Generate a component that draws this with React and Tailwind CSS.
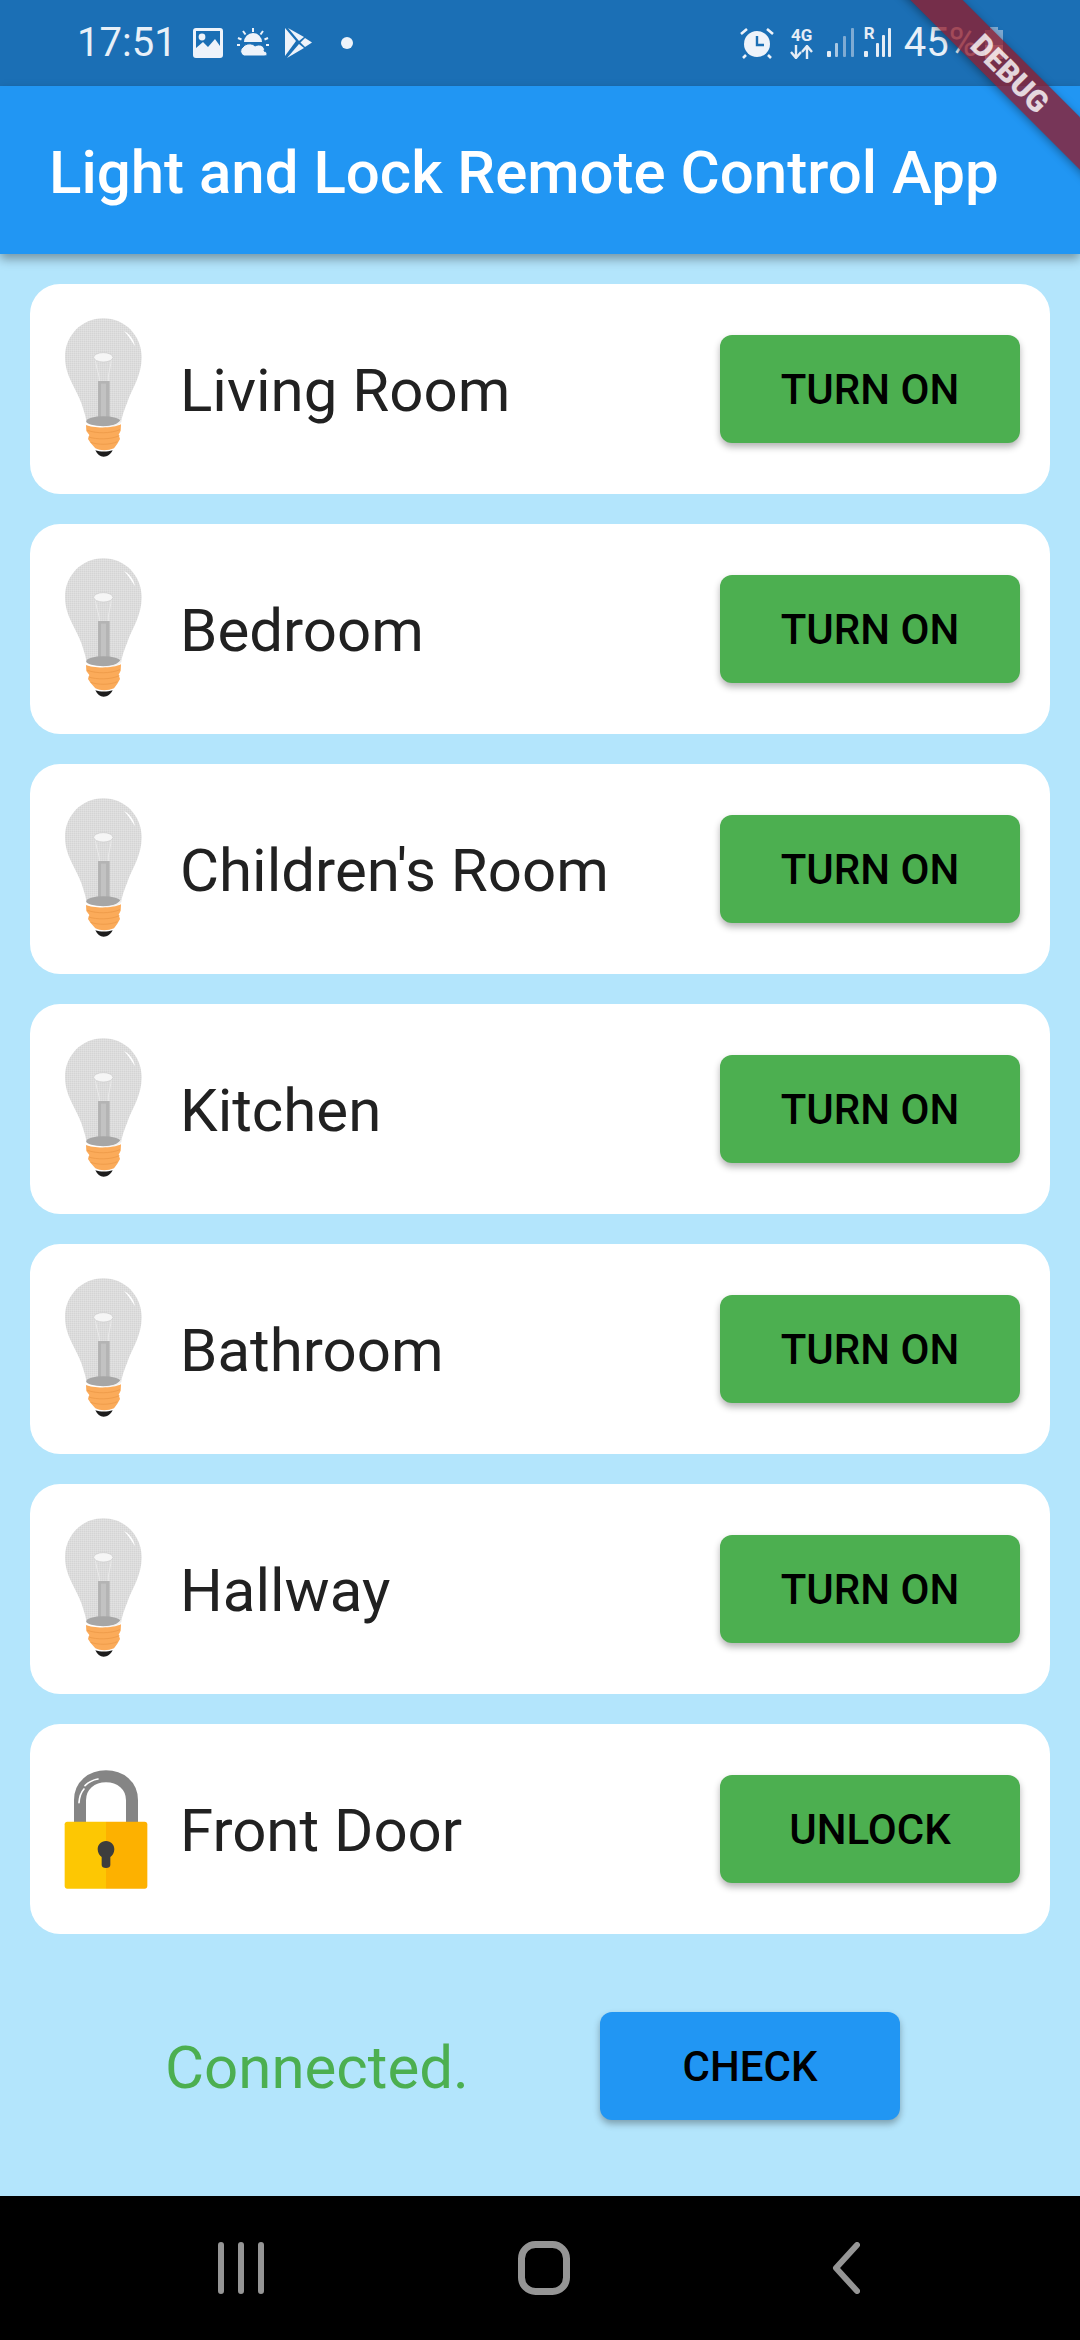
import React from 'react';

const rooms = ['Living Room', 'Bedroom', "Children's Room", 'Kitchen', 'Bathroom', 'Hallway'];

function Bulb({ id }) {
  return (
    <svg width="90" height="150" viewBox="120 75 270 450" className="shrink-0">
      <defs>
        <pattern id={id} width="6" height="6" patternUnits="userSpaceOnUse">
          <rect width="6" height="6" fill="#dcdcdc" />
          <rect width="3" height="3" fill="#d4d4d4" />
          <rect x="3" y="3" width="3" height="3" fill="#e2e2e2" />
        </pattern>
      </defs>
      <path d="M250 88C185 88 135 140 135 205C135 262 170 300 185 345C193 370 198 385 200 402L303 402C305 385 312 365 322 340C335 300 365 262 365 205C365 140 315 88 250 88Z" fill={`url(#${id})`} />
      <path d="M226 212C230 245 240 260 238 280M274 212C270 245 262 260 266 280" fill="none" stroke="#eaeaea" strokeWidth="3" />
      <ellipse cx="250" cy="205" rx="29" ry="14" fill="#f6f6f6" stroke="#c8c8c8" strokeWidth="2" />
      <rect x="234" y="276" width="35" height="112" fill="#b4b4b4" />
      <rect x="243" y="284" width="15" height="100" fill="#c2c2c2" />
      <ellipse cx="250" cy="397" rx="51" ry="15" fill="#a6a6a6" />
      <path d="M312 126C330 136 342 152 345 172C335 155 325 140 312 126Z" fill="#ffffff" />
      <path d="M250 412C275 412 292 406 302 392L303 402C290 412 270 416 250 412Z" fill="#f2f2f2" />
      <path d="M198 408C220 418 280 418 303 406L302 425L296 437L300 450L292 464L282 478C265 486 240 486 226 478L212 462L204 450L208 438L199 426Z" fill="#fbab5a" />
      <path d="M202 424C230 434 270 434 300 422M206 444C230 452 272 452 298 440M212 460C235 468 270 468 292 458" fill="none" stroke="#f09d4b" strokeWidth="3" />
      <path d="M226 484C240 489 262 489 278 484C272 496 262 503 251 503C240 503 232 496 226 484Z" fill="#1d1d1d" />
    </svg>
  );
}

function Lock() {
  return (
    <svg width="90" height="150" viewBox="120 99 270 450" className="shrink-0">
      <path d="M180 305V238C180 192 216 166 258 166C300 166 336 192 336 238V305" fill="none" stroke="#858585" strokeWidth="36" />
      <path d="M177 245C178 228 183 214 192 204" fill="none" stroke="#ffffff" strokeWidth="5" strokeLinecap="round" />
      <path d="M195 194C207 182 222 176 234 174" fill="none" stroke="#ffffff" strokeWidth="5" strokeLinecap="round" />
      <path d="M258 302H142C137 302 134 305 134 310V495C134 500 137 503 142 503H258Z" fill="#fdc703" />
      <path d="M258 302H374C379 302 382 305 382 310V495C382 500 379 503 374 503H258Z" fill="#fdb100" />
      <path d="M258 360C243 360 233 371 233 385C233 396 239 404 245 408V432C245 438 250 441 258 441C266 441 271 438 271 432V408C277 404 283 396 283 385C283 371 273 360 258 360Z" fill="#3d3d3d" />
    </svg>
  );
}

function Row({ label, action, icon }) {
  return (
    <div className="flex h-[210px] items-center rounded-[30px] bg-white px-[30px]">
      {icon}
      <span className="ml-[30px] pt-[3px] text-[60px] leading-none text-[#212121]">{label}</span>
      <button className="ml-auto h-[108px] w-[300px] rounded-[12px] bg-[#4caf50] text-[42px] font-medium text-black shadow-[0_4px_7px_rgba(0,0,0,0.3)]">
        {action}
      </button>
    </div>
  );
}

function StatusLeft() {
  return (
    <div className="flex items-center">
      <span className="ml-[77px] text-[40px] leading-none text-[#e8f0f8]">17:51</span>
      <svg width="30" height="30" viewBox="0 0 30 30" className="ml-[16px]">
        <path fillRule="evenodd" d="M3 0H27A3 3 0 0 1 30 3V27A3 3 0 0 1 27 30H3A3 3 0 0 1 0 27V3A3 3 0 0 1 3 0ZM3 3V20L10 14L15 19L22 11L27 18V3Z" fill="#eef3fa" />
        <circle cx="9" cy="9" r="3.4" fill="#eef3fa" />
      </svg>
      <svg width="32" height="30" viewBox="0 0 32 30" className="ml-[14px]">
        <path d="M7 14A9 9 0 0 1 25 14Z" fill="#eef3fa" />
        <path d="M16 0V4M6 3L8.5 6.5M26 3L23.5 6.5M1 10L4.5 11.5M31 10L27.5 11.5M0 17H3M29 17H32" stroke="#eef3fa" strokeWidth="2" />
        <path d="M7 28A5 5 0 0 1 6 19C9 15 15 15 18 18C23 15 29 19 27 23C31 24 31 28 27 28Z" fill="#eef3fa" stroke="#1b6fb5" strokeWidth="1" />
      </svg>
      <svg width="28" height="30" viewBox="0 0 28 30" className="ml-[15px]">
        <path d="M1 0L12 13L1 28Z" fill="#eef3fa" />
        <path d="M4 0L20 9L15 13Z" fill="#eef3fa" />
        <path d="M21 10L28 14.5L21 19L16.5 14.5Z" fill="#eef3fa" />
        <path d="M3 30L20 20L15 16Z" fill="#eef3fa" />
      </svg>
      <span className="ml-[29px] h-3 w-3 rounded-full bg-[#eef3fa]" />
    </div>
  );
}

function StatusRight() {
  return (
    <div className="ml-auto flex items-center">
      <svg width="34" height="32" viewBox="0 0 34 32">
        <circle cx="17" cy="17" r="13" fill="#eef3fa" />
        <path d="M17 9V18H24" fill="none" stroke="#1b6fb5" strokeWidth="2.4" />
        <path d="M1 7L7 2M33 7L27 2M6 28L3 31M28 28L31 31" stroke="#eef3fa" strokeWidth="2.6" />
      </svg>
      <div className="ml-[16px] flex w-[24px] flex-col items-center text-[#e6edf5]">
        <span className="text-[17px] font-bold leading-[15px]">4G</span>
        <svg width="23" height="14" viewBox="0 0 23 14" className="mt-[2px]">
          <path d="M6 0V12M1 7L6 13L11 7M17 14V2M12 7L17 1L22 7" fill="none" stroke="#e6edf5" strokeWidth="2.4" />
        </svg>
      </div>
      <svg width="28" height="30" viewBox="0 0 28 30" className="ml-[13px]">
        <rect x="0" y="23" width="4" height="6" rx="1" fill="#e6edf5" />
        <rect x="8" y="15" width="3" height="14" rx="1" fill="#a9c7e2" />
        <rect x="16" y="8" width="3" height="21" rx="1" fill="#7fabd3" />
        <rect x="24" y="0" width="3" height="29" rx="1" fill="#7fabd3" />
      </svg>
      <div className="relative ml-[9px] h-[30px] w-[28px]">
        <span className="absolute left-[0px] top-[-2px] text-[17px] font-bold leading-[15px] text-[#e6edf5]">R</span>
        <svg width="28" height="30" viewBox="0 0 28 30">
          <rect x="0" y="23" width="4" height="6" rx="1" fill="#e6edf5" />
          <rect x="12" y="15" width="3" height="14" rx="1" fill="#e6edf5" />
          <rect x="24" y="0" width="3" height="29" rx="1" fill="#e6edf5" />
          <rect x="18" y="7" width="3" height="22" rx="1" fill="#e6edf5" />
        </svg>
      </div>
      <span className="ml-[12px] text-[40px] leading-none text-[#e8f0f8]">45%</span>
      <svg width="20" height="32" viewBox="0 0 20 32" className="ml-[6px] mr-[76px]">
        <path d="M6 0H14V3H19V32H1V3H6Z" fill="#7fabd3" />
        <rect x="1" y="18" width="18" height="14" fill="#eef3fa" />
      </svg>
    </div>
  );
}

export default function App() {
  return (
    <div className="relative h-[2340px] w-[1080px] overflow-hidden bg-[#b3e5fc] font-['Roboto',sans-serif]">
      <div className="flex h-[86px] items-center bg-[#1b6fb5]">
        <StatusLeft />
        <StatusRight />
      </div>

      <header className="relative flex h-[168px] items-center bg-[#2196f3] pl-[49px] pt-[6px] shadow-[0_5px_10px_rgba(0,0,0,0.35)]">
        <h1 className="text-[60px] font-medium leading-none text-white">Light and Lock Remote Control App</h1>
      </header>

      <main className="flex flex-col gap-[30px] px-[30px] pt-[30px]">
        {rooms.map((room, i) => (
          <Row key={room} label={room} action="TURN ON" icon={<Bulb id={`glass${i}`} />} />
        ))}
        <Row label="Front Door" action="UNLOCK" icon={<Lock />} />
      </main>

      <div className="mt-[78px] flex h-[108px] items-center pl-[165px] pr-[180px]">
        <span className="pt-[4px] text-[60px] leading-none text-[#4caf50]">Connected.</span>
        <button className="ml-auto h-[108px] w-[300px] rounded-[12px] bg-[#2196f3] text-[42px] font-medium text-black shadow-[0_4px_7px_rgba(0,0,0,0.3)]">
          CHECK
        </button>
      </div>

      <nav className="mt-[76px] flex h-[144px] items-center bg-black pl-[218px]">
        <svg width="46" height="52" viewBox="0 0 46 52">
          <path d="M3 3V49M23 3V49M43 3V49" stroke="#959595" strokeWidth="6" strokeLinecap="round" />
        </svg>
        <svg width="52" height="54" viewBox="0 0 52 54" className="ml-[254px]">
          <rect x="3.5" y="3.5" width="45" height="47" rx="14" fill="none" stroke="#959595" strokeWidth="7" />
        </svg>
        <svg width="28" height="52" viewBox="0 0 28 52" className="ml-[262px]">
          <path d="M25 3L4 26L25 49" fill="none" stroke="#959595" strokeWidth="6" strokeLinecap="round" strokeLinejoin="round" />
        </svg>
      </nav>

      {/* debug ribbon, sits over the corner */}
      <div className="absolute left-[810px] top-[55px] flex h-[37px] w-[400px] rotate-45 items-center justify-center bg-[#8f1c2cc8] shadow-[0_2px_8px_rgba(0,0,0,0.35)]">
        <span className="text-[30px] font-black leading-none text-white/80">DEBUG</span>
      </div>
    </div>
  );
}
